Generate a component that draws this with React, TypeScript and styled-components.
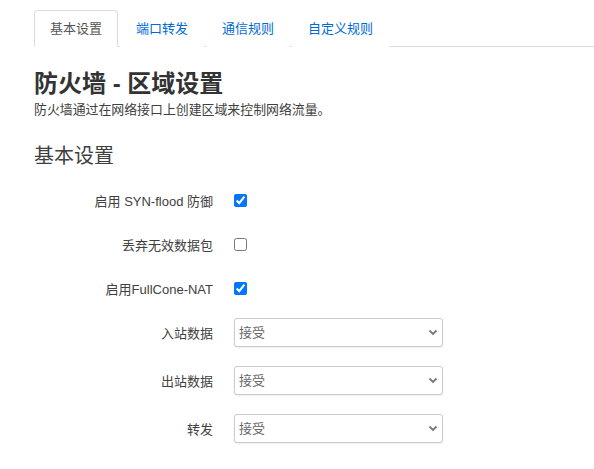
import React from "react";
import styled, { createGlobalStyle } from "styled-components";

const GlobalStyle = createGlobalStyle`
    body {
        margin: 0;
        background: #fff;
        font-family: "Liberation Sans", "Noto Sans CJK SC", sans-serif;
        color: #404040;
    }
`;

const Page = styled.div`
    padding: 10px 0 0 34px;
`;

const Tabs = styled.ul`
    display: flex;
    margin: 0;
    padding: 0;
    list-style: none;
    border-bottom: 1px solid #ddd;
`;

const Tab = styled.li<{ active?: boolean }>`
    margin: 0 2px -1px 0;
    padding: 0 15px;
    height: 35px;
    line-height: 35px;
    font-size: 13px;
    border: 1px solid ${({ active }) => (active ? "#ddd" : "transparent")};
    border-bottom-color: ${({ active }) => (active ? "#fff" : "transparent")};
    border-radius: 4px 4px 0 0;
    background: #fff;
    color: ${({ active }) => (active ? "#555" : "#0069d6")};
    cursor: pointer;
`;

const Title = styled.h2`
    margin: 23px 0 0;
    font-size: 24px;
    line-height: 28px;
    font-weight: bold;
    color: #333;
`;

const Desc = styled.p`
    margin: 4px 0 0;
    font-size: 12.9px;
    line-height: 16px;
    color: #404040;
`;

const Section = styled.h3`
    margin: 26px 0 0;
    font-size: 20px;
    line-height: 24px;
    font-weight: normal;
    color: #404040;
`;

const Form = styled.div`
    margin-top: 18px;
`;

const Row = styled.div<{ gap: number }>`
    display: flex;
    align-items: center;
    min-height: 29px;
    margin-bottom: ${({ gap }) => gap}px;
`;

const Label = styled.label`
    width: 179px;
    text-align: right;
    font-size: 13px;
    color: #404040;
    margin-right: 21px;
`;

const Check = styled.input`
    margin: 0;
    width: 13px;
    height: 13px;
`;

const SelectWrap = styled.div`
    position: relative;
    width: 209px;
`;

const Select = styled.select`
    appearance: none;
    width: 100%;
    height: 29px;
    padding: 0 4px;
    border: 1px solid #ccc;
    border-radius: 3px;
    background: #fff;
    box-shadow: 0 1px 2px rgba(0, 0, 0, 0.08);
    font-family: "Liberation Sans", "Noto Sans CJK SC", sans-serif;
    font-size: 13px;
    color: #666;
    outline: none;
`;

const Chevron = styled.svg`
    position: absolute;
    right: 5px;
    top: 10px;
    pointer-events: none;
`;

function Dropdown() {
    return (
        <SelectWrap>
            <Select defaultValue="ACCEPT">
                <option value="ACCEPT">接受</option>
                <option value="REJECT">拒绝</option>
                <option value="DROP">丢弃</option>
            </Select>
            <Chevron width="10" height="8" viewBox="0 0 10 8">
                <path d="M1.5 2.5 L5 6 L8.5 2.5" fill="none" stroke="#777" strokeWidth="1.8" />
            </Chevron>
        </SelectWrap>
    );
}

const tabs = ["基本设置", "端口转发", "通信规则", "自定义规则"];

const checks = [
    { label: "启用 SYN-flood 防御", checked: true },
    { label: "丢弃无效数据包", checked: false },
    { label: "启用FullCone-NAT", checked: true },
];

const selects = ["入站数据", "出站数据", "转发"];

function App() {
    return (
        <Page>
            <GlobalStyle />
            <Tabs>
                {tabs.map((t, i) => (
                    <Tab key={t} active={i === 0}>{t}</Tab>
                ))}
            </Tabs>
            <Title>防火墙 - 区域设置</Title>
            <Desc>防火墙通过在网络接口上创建区域来控制网络流量。</Desc>
            <Section>基本设置</Section>
            <Form>
                {checks.map((c) => (
                    <Row key={c.label} gap={15}>
                        <Label>{c.label}</Label>
                        <Check type="checkbox" defaultChecked={c.checked} />
                    </Row>
                ))}
                {selects.map((s) => (
                    <Row key={s} gap={19}>
                        <Label>{s}</Label>
                        <Dropdown />
                    </Row>
                ))}
            </Form>
        </Page>
    );
}

export default App;
